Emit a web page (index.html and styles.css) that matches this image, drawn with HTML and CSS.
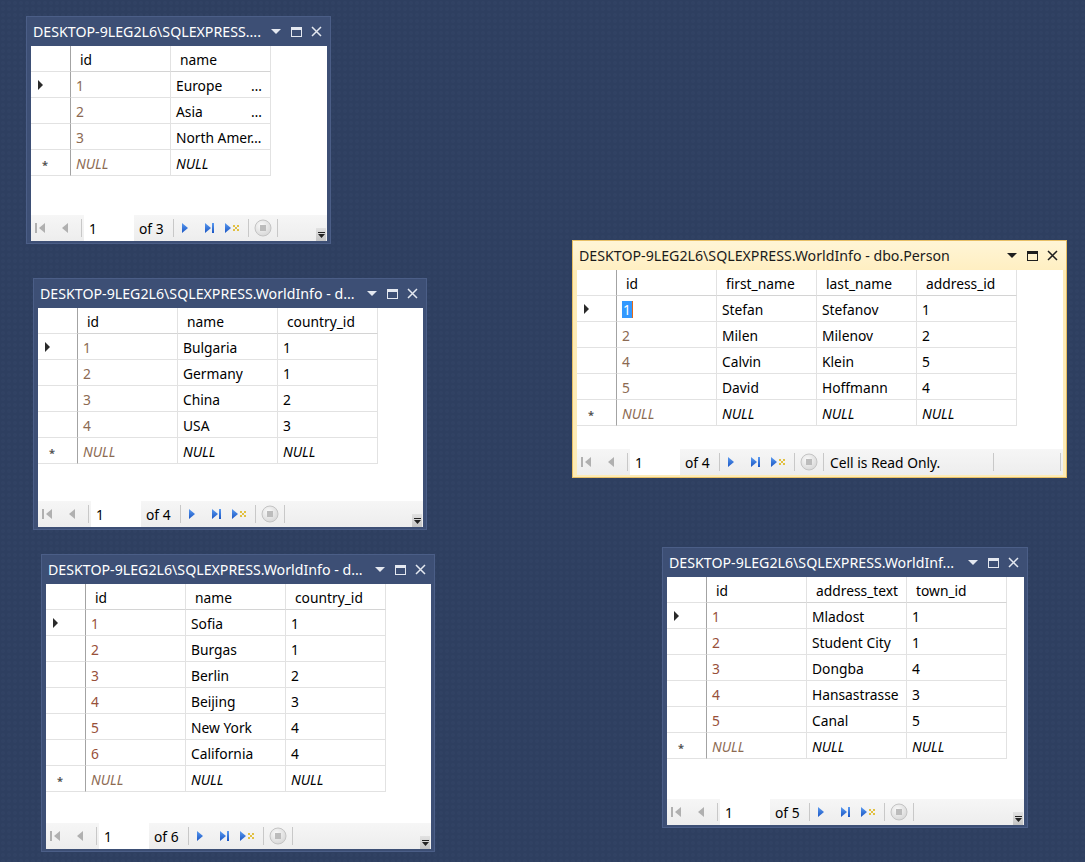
FILE: index.html
```html
<!DOCTYPE html>
<html>
<head>
<meta charset="utf-8">
<link rel="stylesheet" href="styles.css">
</head>
<body>
<svg class="defs" width="0" height="0">
  <defs>
    <linearGradient id="gb" x1="0" y1="0" x2="0" y2="1">
      <stop offset="0" stop-color="#5a9af0"/>
      <stop offset="1" stop-color="#1a56c4"/>
    </linearGradient>
    <radialGradient id="gs" cx="0.4" cy="0.35" r="0.7">
      <stop offset="0" stop-color="#fafafa"/>
      <stop offset="1" stop-color="#d6d6d6"/>
    </radialGradient>
  </defs>
</svg>

<!-- Window 1 -->
<div class="win w1">
  <div class="titlebar">
    <span class="title">DESKTOP-9LEG2L6\SQLEXPRESS....</span>
    <span class="tbtn"><svg width="10" height="6"><path d="M0 0H10L5 5Z" fill="currentColor"/></svg></span>
    <span class="tbtn"><svg width="11" height="10"><rect x="0.5" y="0.5" width="10" height="9" fill="none" stroke="currentColor"/><rect x="0" y="0" width="11" height="3" fill="currentColor"/></svg></span>
    <span class="tbtn"><svg width="11" height="11"><path d="M1 1L10 10M10 1L1 10" stroke="currentColor" stroke-width="1.5"/></svg></span>
  </div>
  <div class="body">
    <div class="grid cols2">
      <div class="cell rh"></div><div class="cell hd">id</div><div class="cell hd">name</div>
      <div class="cell rh"><svg class="sel" width="6" height="10"><path d="M0 0V10L5 5Z"/></svg></div><div class="cell idc">1</div><div class="cell">Europe<span class="ell">…</span></div>
      <div class="cell rh"></div><div class="cell idc">2</div><div class="cell">Asia<span class="ell">…</span></div>
      <div class="cell rh"></div><div class="cell idc">3</div><div class="cell">North Amer…</div>
      <div class="cell rh"><span class="star">*</span></div><div class="cell idc null">NULL</div><div class="cell null">NULL</div>
    </div>
    <div class="fill"></div>
    <div class="toolbar">
      <span class="ti t-first"><svg width="11" height="12"><rect x="0" y="1" width="2" height="10" fill="#b0b0b0"/><path d="M10 1V11L4 6Z" fill="#b0b0b0"/></svg></span>
      <span class="ti t-prev"><svg width="7" height="12"><path d="M6 1V11L0 6Z" fill="#b0b0b0"/></svg></span>
      <span class="sep"></span>
      <span class="tbox">1</span>
      <span class="oftext">of 3</span>
      <span class="sep"></span>
      <span class="ti t-next"><svg width="7" height="12"><path d="M0 1V11L6 6Z" fill="url(#gb)"/></svg></span>
      <span class="ti t-last"><svg width="10" height="12"><path d="M0 1V11L6 6Z" fill="url(#gb)"/><rect x="7" y="1" width="2" height="10" fill="url(#gb)"/></svg></span>
      <span class="ti t-new"><svg width="15" height="12"><path d="M0 1V11L6 6Z" fill="url(#gb)"/><g fill="#e2c040"><rect x="8" y="3" width="2" height="2"/><rect x="12" y="3" width="2" height="2"/><rect x="10" y="5" width="2" height="2"/><rect x="8" y="7" width="2" height="2"/><rect x="12" y="7" width="2" height="2"/></g></svg></span>
      <span class="sep"></span>
      <span class="ti t-stop"><svg width="18" height="18"><circle cx="9" cy="9" r="8" fill="url(#gs)" stroke="#c4c4c4"/><rect x="6" y="6" width="6" height="6" fill="#bcbcbc"/></svg></span>
      <span class="sep"></span>
      <span class="ovf"><svg width="7" height="8"><rect x="0" y="1" width="7" height="1" fill="#222"/><path d="M0 3H7L3.5 7Z" fill="#222"/></svg></span>
    </div>
  </div>
</div>

<!-- Window 2 -->
<div class="win w2">
  <div class="titlebar">
    <span class="title">DESKTOP-9LEG2L6\SQLEXPRESS.WorldInfo - d...</span>
    <span class="tbtn"><svg width="10" height="6"><path d="M0 0H10L5 5Z" fill="currentColor"/></svg></span>
    <span class="tbtn"><svg width="11" height="10"><rect x="0.5" y="0.5" width="10" height="9" fill="none" stroke="currentColor"/><rect x="0" y="0" width="11" height="3" fill="currentColor"/></svg></span>
    <span class="tbtn"><svg width="11" height="11"><path d="M1 1L10 10M10 1L1 10" stroke="currentColor" stroke-width="1.5"/></svg></span>
  </div>
  <div class="body">
    <div class="grid cols3">
      <div class="cell rh"></div><div class="cell hd">id</div><div class="cell hd">name</div><div class="cell hd">country_id</div>
      <div class="cell rh"><svg class="sel" width="6" height="10"><path d="M0 0V10L5 5Z"/></svg></div><div class="cell idc">1</div><div class="cell">Bulgaria</div><div class="cell">1</div>
      <div class="cell rh"></div><div class="cell idc">2</div><div class="cell">Germany</div><div class="cell">1</div>
      <div class="cell rh"></div><div class="cell idc">3</div><div class="cell">China</div><div class="cell">2</div>
      <div class="cell rh"></div><div class="cell idc">4</div><div class="cell">USA</div><div class="cell">3</div>
      <div class="cell rh"><span class="star">*</span></div><div class="cell idc null">NULL</div><div class="cell null">NULL</div><div class="cell null">NULL</div>
    </div>
    <div class="fill"></div>
    <div class="toolbar">
      <span class="ti t-first"><svg width="11" height="12"><rect x="0" y="1" width="2" height="10" fill="#b0b0b0"/><path d="M10 1V11L4 6Z" fill="#b0b0b0"/></svg></span>
      <span class="ti t-prev"><svg width="7" height="12"><path d="M6 1V11L0 6Z" fill="#b0b0b0"/></svg></span>
      <span class="sep"></span>
      <span class="tbox">1</span>
      <span class="oftext">of 4</span>
      <span class="sep"></span>
      <span class="ti t-next"><svg width="7" height="12"><path d="M0 1V11L6 6Z" fill="url(#gb)"/></svg></span>
      <span class="ti t-last"><svg width="10" height="12"><path d="M0 1V11L6 6Z" fill="url(#gb)"/><rect x="7" y="1" width="2" height="10" fill="url(#gb)"/></svg></span>
      <span class="ti t-new"><svg width="15" height="12"><path d="M0 1V11L6 6Z" fill="url(#gb)"/><g fill="#e2c040"><rect x="8" y="3" width="2" height="2"/><rect x="12" y="3" width="2" height="2"/><rect x="10" y="5" width="2" height="2"/><rect x="8" y="7" width="2" height="2"/><rect x="12" y="7" width="2" height="2"/></g></svg></span>
      <span class="sep"></span>
      <span class="ti t-stop"><svg width="18" height="18"><circle cx="9" cy="9" r="8" fill="url(#gs)" stroke="#c4c4c4"/><rect x="6" y="6" width="6" height="6" fill="#bcbcbc"/></svg></span>
      <span class="sep"></span>
      <span class="ovf"><svg width="7" height="8"><rect x="0" y="1" width="7" height="1" fill="#222"/><path d="M0 3H7L3.5 7Z" fill="#222"/></svg></span>
    </div>
  </div>
</div>

<!-- Window 3 (active) -->
<div class="win w3 active">
  <div class="titlebar">
    <span class="title">DESKTOP-9LEG2L6\SQLEXPRESS.WorldInfo - dbo.Person</span>
    <span class="tbtn"><svg width="10" height="6"><path d="M0 0H10L5 5Z" fill="currentColor"/></svg></span>
    <span class="tbtn"><svg width="11" height="10"><rect x="0.5" y="0.5" width="10" height="9" fill="none" stroke="currentColor"/><rect x="0" y="0" width="11" height="3" fill="currentColor"/></svg></span>
    <span class="tbtn"><svg width="11" height="11"><path d="M1 1L10 10M10 1L1 10" stroke="currentColor" stroke-width="1.5"/></svg></span>
  </div>
  <div class="body">
    <div class="grid cols4">
      <div class="cell rh"></div><div class="cell hd">id</div><div class="cell hd">first_name</div><div class="cell hd">last_name</div><div class="cell hd">address_id</div>
      <div class="cell rh"><svg class="sel" width="6" height="10"><path d="M0 0V10L5 5Z"/></svg></div><div class="cell idc"><span class="hl">1</span><span class="caret"></span></div><div class="cell">Stefan</div><div class="cell">Stefanov</div><div class="cell">1</div>
      <div class="cell rh"></div><div class="cell idc">2</div><div class="cell">Milen</div><div class="cell">Milenov</div><div class="cell">2</div>
      <div class="cell rh"></div><div class="cell idc">4</div><div class="cell">Calvin</div><div class="cell">Klein</div><div class="cell">5</div>
      <div class="cell rh"></div><div class="cell idc">5</div><div class="cell">David</div><div class="cell">Hoffmann</div><div class="cell">4</div>
      <div class="cell rh"><span class="star">*</span></div><div class="cell idc null">NULL</div><div class="cell null">NULL</div><div class="cell null">NULL</div><div class="cell null">NULL</div>
    </div>
    <div class="fill"></div>
    <div class="toolbar">
      <span class="ti t-first"><svg width="11" height="12"><rect x="0" y="1" width="2" height="10" fill="#b0b0b0"/><path d="M10 1V11L4 6Z" fill="#b0b0b0"/></svg></span>
      <span class="ti t-prev"><svg width="7" height="12"><path d="M6 1V11L0 6Z" fill="#b0b0b0"/></svg></span>
      <span class="sep"></span>
      <span class="tbox">1</span>
      <span class="oftext">of 4</span>
      <span class="sep"></span>
      <span class="ti t-next"><svg width="7" height="12"><path d="M0 1V11L6 6Z" fill="url(#gb)"/></svg></span>
      <span class="ti t-last"><svg width="10" height="12"><path d="M0 1V11L6 6Z" fill="url(#gb)"/><rect x="7" y="1" width="2" height="10" fill="url(#gb)"/></svg></span>
      <span class="ti t-new"><svg width="15" height="12"><path d="M0 1V11L6 6Z" fill="url(#gb)"/><g fill="#e2c040"><rect x="8" y="3" width="2" height="2"/><rect x="12" y="3" width="2" height="2"/><rect x="10" y="5" width="2" height="2"/><rect x="8" y="7" width="2" height="2"/><rect x="12" y="7" width="2" height="2"/></g></svg></span>
      <span class="sep"></span>
      <span class="ti t-stop"><svg width="18" height="18"><circle cx="9" cy="9" r="8" fill="url(#gs)" stroke="#c4c4c4"/><rect x="6" y="6" width="6" height="6" fill="#bcbcbc"/></svg></span>
      <span class="sep"></span>
      <span class="status">Cell is Read Only.</span>
      <span class="sep"></span>
      <span class="gap66"></span>
      <span class="sep"></span>
    </div>
  </div>
</div>

<!-- Window 4 -->
<div class="win w4">
  <div class="titlebar">
    <span class="title">DESKTOP-9LEG2L6\SQLEXPRESS.WorldInfo - d...</span>
    <span class="tbtn"><svg width="10" height="6"><path d="M0 0H10L5 5Z" fill="currentColor"/></svg></span>
    <span class="tbtn"><svg width="11" height="10"><rect x="0.5" y="0.5" width="10" height="9" fill="none" stroke="currentColor"/><rect x="0" y="0" width="11" height="3" fill="currentColor"/></svg></span>
    <span class="tbtn"><svg width="11" height="11"><path d="M1 1L10 10M10 1L1 10" stroke="currentColor" stroke-width="1.5"/></svg></span>
  </div>
  <div class="body">
    <div class="grid cols3">
      <div class="cell rh"></div><div class="cell hd">id</div><div class="cell hd">name</div><div class="cell hd">country_id</div>
      <div class="cell rh"><svg class="sel" width="6" height="10"><path d="M0 0V10L5 5Z"/></svg></div><div class="cell idc red">1</div><div class="cell">Sofia</div><div class="cell">1</div>
      <div class="cell rh"></div><div class="cell idc red">2</div><div class="cell">Burgas</div><div class="cell">1</div>
      <div class="cell rh"></div><div class="cell idc red">3</div><div class="cell">Berlin</div><div class="cell">2</div>
      <div class="cell rh"></div><div class="cell idc red">4</div><div class="cell">Beijing</div><div class="cell">3</div>
      <div class="cell rh"></div><div class="cell idc red">5</div><div class="cell">New York</div><div class="cell">4</div>
      <div class="cell rh"></div><div class="cell idc red">6</div><div class="cell">California</div><div class="cell">4</div>
      <div class="cell rh"><span class="star">*</span></div><div class="cell idc null">NULL</div><div class="cell null">NULL</div><div class="cell null">NULL</div>
    </div>
    <div class="fill"></div>
    <div class="toolbar">
      <span class="ti t-first"><svg width="11" height="12"><rect x="0" y="1" width="2" height="10" fill="#b0b0b0"/><path d="M10 1V11L4 6Z" fill="#b0b0b0"/></svg></span>
      <span class="ti t-prev"><svg width="7" height="12"><path d="M6 1V11L0 6Z" fill="#b0b0b0"/></svg></span>
      <span class="sep"></span>
      <span class="tbox">1</span>
      <span class="oftext">of 6</span>
      <span class="sep"></span>
      <span class="ti t-next"><svg width="7" height="12"><path d="M0 1V11L6 6Z" fill="url(#gb)"/></svg></span>
      <span class="ti t-last"><svg width="10" height="12"><path d="M0 1V11L6 6Z" fill="url(#gb)"/><rect x="7" y="1" width="2" height="10" fill="url(#gb)"/></svg></span>
      <span class="ti t-new"><svg width="15" height="12"><path d="M0 1V11L6 6Z" fill="url(#gb)"/><g fill="#e2c040"><rect x="8" y="3" width="2" height="2"/><rect x="12" y="3" width="2" height="2"/><rect x="10" y="5" width="2" height="2"/><rect x="8" y="7" width="2" height="2"/><rect x="12" y="7" width="2" height="2"/></g></svg></span>
      <span class="sep"></span>
      <span class="ti t-stop"><svg width="18" height="18"><circle cx="9" cy="9" r="8" fill="url(#gs)" stroke="#c4c4c4"/><rect x="6" y="6" width="6" height="6" fill="#bcbcbc"/></svg></span>
      <span class="sep"></span>
      <span class="ovf"><svg width="7" height="8"><rect x="0" y="1" width="7" height="1" fill="#222"/><path d="M0 3H7L3.5 7Z" fill="#222"/></svg></span>
    </div>
  </div>
</div>

<!-- Window 5 -->
<div class="win w5">
  <div class="titlebar">
    <span class="title">DESKTOP-9LEG2L6\SQLEXPRESS.WorldInf...</span>
    <span class="tbtn"><svg width="10" height="6"><path d="M0 0H10L5 5Z" fill="currentColor"/></svg></span>
    <span class="tbtn"><svg width="11" height="10"><rect x="0.5" y="0.5" width="10" height="9" fill="none" stroke="currentColor"/><rect x="0" y="0" width="11" height="3" fill="currentColor"/></svg></span>
    <span class="tbtn"><svg width="11" height="11"><path d="M1 1L10 10M10 1L1 10" stroke="currentColor" stroke-width="1.5"/></svg></span>
  </div>
  <div class="body">
    <div class="grid cols3">
      <div class="cell rh"></div><div class="cell hd">id</div><div class="cell hd">address_text</div><div class="cell hd">town_id</div>
      <div class="cell rh"><svg class="sel" width="6" height="10"><path d="M0 0V10L5 5Z"/></svg></div><div class="cell idc red">1</div><div class="cell">Mladost</div><div class="cell">1</div>
      <div class="cell rh"></div><div class="cell idc red">2</div><div class="cell">Student City</div><div class="cell">1</div>
      <div class="cell rh"></div><div class="cell idc red">3</div><div class="cell">Dongba</div><div class="cell">4</div>
      <div class="cell rh"></div><div class="cell idc red">4</div><div class="cell">Hansastrasse</div><div class="cell">3</div>
      <div class="cell rh"></div><div class="cell idc red">5</div><div class="cell">Canal</div><div class="cell">5</div>
      <div class="cell rh"><span class="star">*</span></div><div class="cell idc null">NULL</div><div class="cell null">NULL</div><div class="cell null">NULL</div>
    </div>
    <div class="fill"></div>
    <div class="toolbar">
      <span class="ti t-first"><svg width="11" height="12"><rect x="0" y="1" width="2" height="10" fill="#b0b0b0"/><path d="M10 1V11L4 6Z" fill="#b0b0b0"/></svg></span>
      <span class="ti t-prev"><svg width="7" height="12"><path d="M6 1V11L0 6Z" fill="#b0b0b0"/></svg></span>
      <span class="sep"></span>
      <span class="tbox">1</span>
      <span class="oftext">of 5</span>
      <span class="sep"></span>
      <span class="ti t-next"><svg width="7" height="12"><path d="M0 1V11L6 6Z" fill="url(#gb)"/></svg></span>
      <span class="ti t-last"><svg width="10" height="12"><path d="M0 1V11L6 6Z" fill="url(#gb)"/><rect x="7" y="1" width="2" height="10" fill="url(#gb)"/></svg></span>
      <span class="ti t-new"><svg width="15" height="12"><path d="M0 1V11L6 6Z" fill="url(#gb)"/><g fill="#e2c040"><rect x="8" y="3" width="2" height="2"/><rect x="12" y="3" width="2" height="2"/><rect x="10" y="5" width="2" height="2"/><rect x="8" y="7" width="2" height="2"/><rect x="12" y="7" width="2" height="2"/></g></svg></span>
      <span class="sep"></span>
      <span class="ti t-stop"><svg width="18" height="18"><circle cx="9" cy="9" r="8" fill="url(#gs)" stroke="#c4c4c4"/><rect x="6" y="6" width="6" height="6" fill="#bcbcbc"/></svg></span>
      <span class="sep"></span>
      <span class="ovf"><svg width="7" height="8"><rect x="0" y="1" width="7" height="1" fill="#222"/><path d="M0 3H7L3.5 7Z" fill="#222"/></svg></span>
    </div>
  </div>
</div>
</body>
</html>
```

FILE: styles.css
```css
* { box-sizing: border-box; }
html, body { margin: 0; padding: 0; }
body {
  width: 1085px;
  height: 862px;
  overflow: hidden;
  position: relative;
  background-color: #2e3f60;
  background-image: radial-gradient(circle, rgba(120,140,180,0.035) 0 1.5px, transparent 2.5px);
  background-size: 6px 6px;
  font-family: "Noto Sans", "Open Sans", sans-serif;
  font-size: 14px;
  color: #000;
}
.defs { position: absolute; width: 0; height: 0; }

.win {
  position: absolute;
  display: flex;
  flex-direction: column;
  background: #3d4f75;
  border: 1px solid #4b5e87;
  padding: 0 3px 2px 4px;
}
.w1 { left: 26px; top: 16px; width: 305px; height: 228px; }
.w2 { left: 33px; top: 278px; width: 394px; height: 252px; }
.w3 { left: 572px; top: 240px; width: 495px; height: 238px; }
.w4 { left: 41px; top: 554px; width: 394px; height: 298px; }
.w5 { left: 662px; top: 547px; width: 366px; height: 281px; }

.win.active {
  background: #fdebb6;
  border-color: #e7bf66;
}

.titlebar {
  height: 29px;
  flex: none;
  display: flex;
  align-items: center;
  padding-left: 2px;
  color: #ffffff;
  font-size: 14.2px;
}
.active .titlebar {
  color: #1b1b1b;
  background: linear-gradient(#fff5d6, #ffefc2);
  margin: 0 -3px 0 -4px;
  padding-left: 6px;
  padding-right: 3px;
}
.title {
  flex: 1;
  white-space: nowrap;
  overflow: hidden;
}
.tbtn {
  width: 20px;
  height: 20px;
  display: flex;
  align-items: center;
  justify-content: center;
  color: #e4e8f0;
  flex: none;
}
.tbtn:last-child { margin-right: 1px; }
.active .tbtn { color: #1e1e1e; }

.body {
  flex: 1;
  background: #ffffff;
  display: flex;
  flex-direction: column;
  min-height: 0;
}

.grid { display: grid; flex: none; }
.cols2 { grid-template-columns: 40px repeat(2, 100px); }
.cols3 { grid-template-columns: 40px repeat(3, 100px); }
.cols4 { grid-template-columns: 40px repeat(4, 100px); }

.cell {
  height: 26px;
  border-right: 1px solid #e2e2e2;
  border-bottom: 1px solid #e2e2e2;
  padding: 1px 8px 0 5px;
  display: flex;
  align-items: center;
  white-space: nowrap;
  overflow: hidden;
  font-size: 13.8px;
}
.cell.rh { border-right-color: #a3a3a3; padding-left: 7px; padding-top: 0; }
.cell.hd { padding-left: 9px; border-bottom-color: #d4d4d4; }
.idc { color: #8c6a52; }
.idc.red { color: #98503a; }
.null { font-style: italic; }
.ell { margin-left: auto; }
.sel { fill: #2a2a2a; }
.star { font-size: 11px; color: #555; margin-left: 4px; margin-top: 3px; font-weight: bold; }
.hl {
  background: #3399ff;
  color: #fff;
  padding: 0 1px;
  line-height: 17px;
}
.caret {
  width: 1px;
  height: 17px;
  background: #e36b1a;
}

.fill { flex: 1; }

.toolbar {
  flex: none;
  height: 26px;
  display: flex;
  align-items: center;
  background: linear-gradient(#f6f6f6, #ededed);
  font-size: 13.8px;
}
.ti {
  height: 26px;
  display: flex;
  align-items: center;
  justify-content: center;
  flex: none;
}
.t-first { width: 18px; }
.t-prev { width: 32px; }
.t-next { width: 23px; }
.t-last { width: 25px; }
.t-new { width: 26px; justify-content: flex-start; padding-left: 3px; }
.t-stop { width: 28px; }
.sep {
  width: 1px;
  height: 18px;
  background: #c8c8c8;
  flex: none;
}
.tbox {
  width: 50px;
  height: 26px;
  margin-left: 2px;
  background: #ffffff;
  display: flex;
  align-items: center;
  padding-left: 5px;
  padding-top: 1px;
  flex: none;
}
.oftext {
  width: 39px;
  padding-left: 5px;
  padding-top: 1px;
  flex: none;
}
.status {
  width: 169px;
  padding-left: 6px;
  padding-top: 1px;
  flex: none;
  white-space: nowrap;
}
.gap66 { width: 66px; flex: none; }
.ovf {
  margin-left: auto;
  align-self: flex-end;
  width: 10px;
  height: 13px;
  background: linear-gradient(#e2e2e2, #c4c4c4);
  display: flex;
  align-items: center;
  justify-content: center;
  margin-right: 1px;
}
```
